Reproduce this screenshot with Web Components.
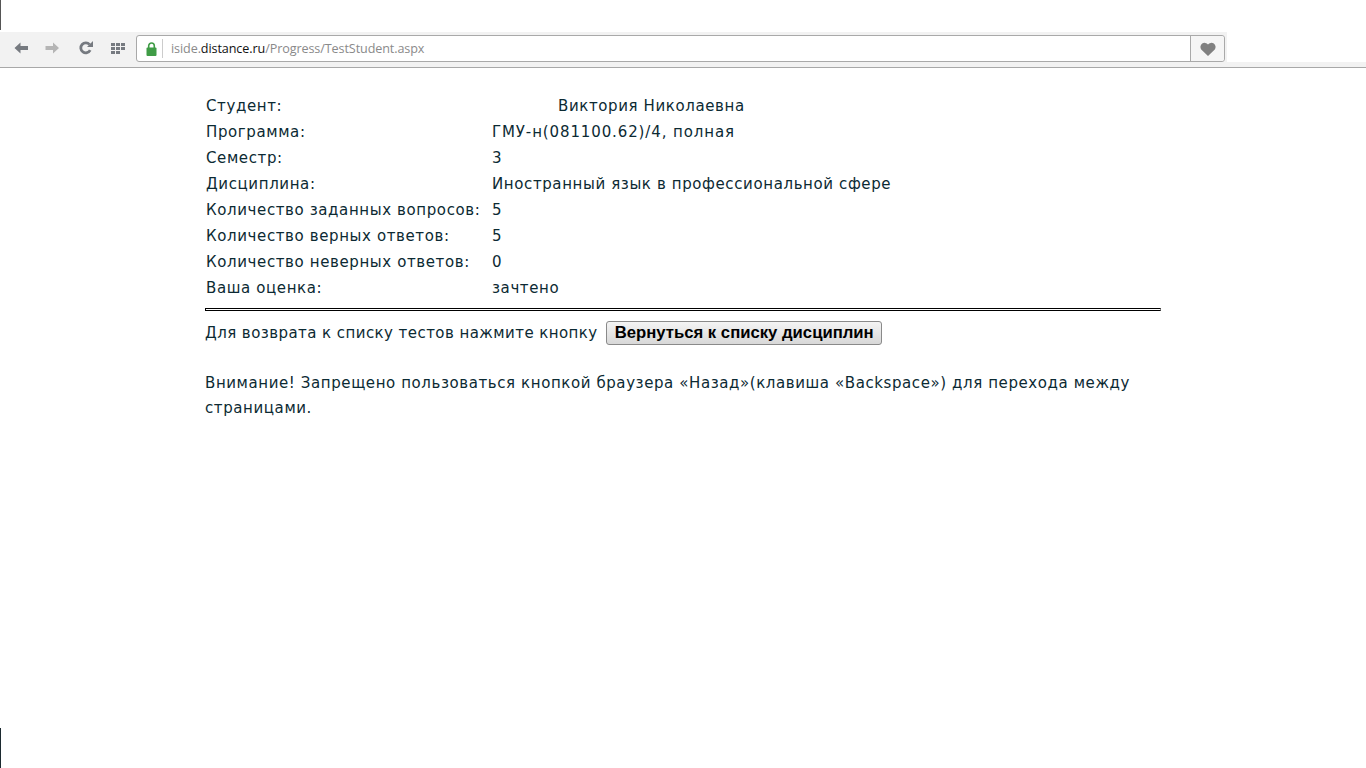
<!DOCTYPE html>
<html lang="ru">
<head>
<meta charset="utf-8">
<title>TestStudent</title>
<style>
  html, body { margin: 0; padding: 0; background: #fff; }
  body { height: 768px; overflow: hidden; position: relative; }
  .edge { position: absolute; left: 0; width: 1px; background: #1c2a30; }
</style>
</head>
<body>
<div class="edge" style="top:0;height:30px;background:#555"></div>
<div class="edge" style="top:728px;height:40px"></div>
<browser-bar url-host="iside." url-domain="distance.ru" url-path="/Progress/TestStudent.aspx"></browser-bar>
<result-page>
  <result-table>
    <result-row label="Студент:"><span style="padding-left:66px">Виктория Николаевна</span></result-row>
    <result-row label="Программа:"><span style="letter-spacing:0.88px">ГМУ-н(081100.62)/4, полная</span></result-row>
    <result-row label="Семестр:">3</result-row>
    <result-row label="Дисциплина:">Иностранный язык в профессиональной сфере</result-row>
    <result-row label="Количество заданных вопросов:">5</result-row>
    <result-row label="Количество верных ответов:">5</result-row>
    <result-row label="Количество неверных ответов:">0</result-row>
    <result-row label="Ваша оценка:">зачтено</result-row>
  </result-table>
</result-page>

<script>
class BrowserBar extends HTMLElement {
    connectedCallback() {
        const host = this.getAttribute('url-host');
        const domain = this.getAttribute('url-domain');
        const path = this.getAttribute('url-path');
        this.attachShadow({ mode: 'open' });
        this.shadowRoot.innerHTML = `
            <style>
                :host { display: block; padding-top: 32px; font-family: "Open Sans", "Noto Sans", sans-serif; }
                .top { width: 1227px; height: 30px; background: #f2f2f2; display: flex; align-items: flex-start; box-sizing: border-box; }
                .strip { height: 5px; background: #f2f2f2; border-bottom: 1px solid #a8a8a8; box-sizing: content-box; }
                .navs { width: 136px; flex: none; height: 32px; display: flex; align-items: center; padding-left: 14px; box-sizing: border-box; }
                .navs svg { display: block; flex: none; }
                .back { margin-right: 17px; }
                .fwd { margin-right: 19px; }
                .reload { margin-right: 18px; }
                .omni { width: 1089px; height: 27px; flex: none; box-sizing: border-box; border: 1px solid #a9a9a9; border-radius: 3px; background: #fff; display: flex; align-items: stretch; margin-top: 3px; }
                .lock { width: 20px; flex: none; display: flex; align-items: center; justify-content: flex-end; }
                .sep { width: 1px; background: #ccc; margin: 3px 0 3px 5px; flex: none; }
                .url { flex: 1; font-size: 12.6px; line-height: 25px; padding-left: 8px; color: #8a8a8a; white-space: nowrap; letter-spacing: -0.1px; }
                .url b { font-weight: 400; color: #111; }
                .heart { width: 33px; flex: none; border-left: 1px solid #a9a9a9; background: #f5f5f5; border-radius: 0 3px 3px 0; display: flex; align-items: center; justify-content: center; }
            </style>
            <div class="top">
                <div class="navs">
                    <svg class="back" width="14" height="12" viewBox="0 0 14 12"><path d="M6.5 0.5 L0.5 6 L6.5 11.5 V8 H14 V4 H6.5 Z" fill="#767a80"/></svg>
                    <svg class="fwd" width="15" height="12" viewBox="0 0 14 12"><path d="M7.5 0.5 L13.5 6 L7.5 11.5 V8 H0 V4 H7.5 Z" fill="#b5b5b5"/></svg>
                    <svg class="reload" width="14" height="14" viewBox="0 0 14 14"><path d="M11.2 9.2 A5 5 0 1 1 10.6 3.6" fill="none" stroke="#767a80" stroke-width="2.8"/><path d="M8 6 H14 V0 Z" fill="#767a80"/></svg>
                    <svg width="14" height="11" viewBox="0 0 14 11" fill="#767a80">
                        <rect x="0" y="0" width="4" height="3"/><rect x="5" y="0" width="4" height="3"/><rect x="10" y="0" width="4" height="3"/>
                        <rect x="0" y="4" width="4" height="3"/><rect x="5" y="4" width="4" height="3"/><rect x="10" y="4" width="4" height="3"/>
                        <rect x="0" y="8" width="4" height="3"/><rect x="5" y="8" width="4" height="3"/>
                    </svg>
                </div>
                <div class="omni">
                    <div class="lock">
                        <svg width="11" height="14" viewBox="0 0 11 14"><path d="M2.7 6 V3.8 A2.8 2.8 0 0 1 8.3 3.8 V6" fill="none" stroke="#3f9c46" stroke-width="1.6"/><rect x="0.5" y="5.5" width="10" height="8.5" rx="1" fill="#3f9c46"/></svg>
                    </div>
                    <div class="sep"></div>
                    <div class="url">${host}<b>${domain}</b>${path}</div>
                    <div class="heart">
                        <svg width="16" height="14" viewBox="0 0 16 14"><path d="M8 14 L1.2 7.4 A4 4 0 0 1 8 2.6 A4 4 0 0 1 14.8 7.4 Z" fill="#808080"/></svg>
                    </div>
                </div>
            </div>
            <div class="strip"></div>
        `;
    }
}

class ResultPage extends HTMLElement {
    connectedCallback() {
        this.attachShadow({ mode: 'open' });
        this.shadowRoot.innerHTML = `
            <style>
                :host { display: block; width: 956px; margin-left: 205px; padding-top: 25px; font-family: "DejaVu Sans", Verdana, sans-serif; font-size: 15px; letter-spacing: 0.61px; color: #0c2a33; }
                .rule { border: 1px solid #000; border-right-color: #888; margin-top: 7px; height: 1px; }
                .back { display: flex; align-items: center; margin-top: 10px; height: 24px; letter-spacing: 0.44px; }
                button { margin-left: 8px; width: 276px; height: 24px; padding: 0 0 0 1px; font: bold 16.7px "Liberation Sans", Arial, sans-serif; color: #000; border: 1px solid #8a8a8a; border-radius: 3px; background: linear-gradient(#f4f4f4, #d8d8d8); box-sizing: border-box; white-space: nowrap; }
                p { margin: 26px 0 0; line-height: 25px; letter-spacing: 0.59px; }
            </style>
            <slot></slot>
            <div class="rule"></div>
            <div class="back">Для возврата к списку тестов нажмите кнопку<button>Вернуться к списку дисциплин</button></div>
            <p>Внимание! Запрещено пользоваться кнопкой браузера «Назад»(клавиша «Backspace») для перехода между страницами.</p>
        `;
    }
}

class ResultTable extends HTMLElement {
    connectedCallback() {
        this.attachShadow({ mode: 'open' });
        this.shadowRoot.innerHTML = `
            <style>
                :host { display: block; padding-left: 1px; }
            </style>
            <slot></slot>
        `;
    }
}

class ResultRow extends HTMLElement {
    connectedCallback() {
        this.attachShadow({ mode: 'open' });
        this.shadowRoot.innerHTML = `
            <style>
                :host { display: grid; grid-template-columns: 286px 1fr; height: 26px; line-height: 26px; white-space: nowrap; }
            </style>
            <div>${this.getAttribute('label')}</div>
            <div><slot></slot></div>
        `;
    }
}

customElements.define('browser-bar', BrowserBar);
customElements.define('result-page', ResultPage);
customElements.define('result-table', ResultTable);
customElements.define('result-row', ResultRow);
</script>
</body>
</html>
